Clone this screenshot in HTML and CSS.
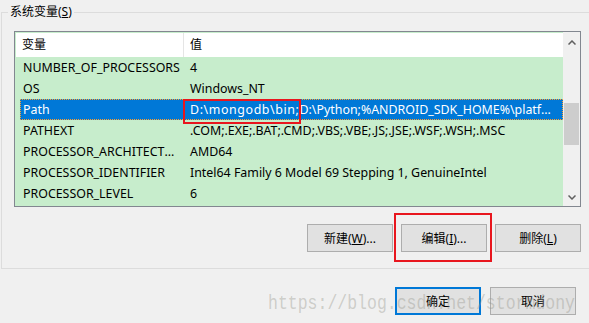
FILE: index.html
```html
<!DOCTYPE html>
<html lang="zh-CN">

<head>
    <meta charset="UTF-8">
    <meta name="viewport" content="width=device-width, initial-scale=1.0">
    <title>环境变量</title>
    <link rel="stylesheet" href="styles.css">
</head>

<body>
    <fieldset class="group">
        <legend class="group-title">系统变量(<u>S</u>)</legend>
        <div class="list">
            <div class="list-body">
                <div class="list-head">
                    <div class="head-name">变量</div>
                    <div class="head-value">值</div>
                </div>
                <div class="row">
                    <div class="cell-name">NUMBER_OF_PROCESSORS</div>
                    <div class="cell-value">4</div>
                </div>
                <div class="row">
                    <div class="cell-name">OS</div>
                    <div class="cell-value">Windows_NT</div>
                </div>
                <div class="row selected">
                    <div class="cell-name">Path</div>
                    <div class="cell-value"><span class="wide">D:\mongodb\bin;</span>D:\Python;%ANDROID_SDK_HOME%\platform-tools;C:\Windows\system32</div>
                    <div class="mark"></div>
                </div>
                <div class="row">
                    <div class="cell-name">PATHEXT</div>
                    <div class="cell-value">.COM;.EXE;.BAT;.CMD;.VBS;.VBE;.JS;.JSE;.WSF;.WSH;.MSC</div>
                </div>
                <div class="row">
                    <div class="cell-name">PROCESSOR_ARCHITECTURE</div>
                    <div class="cell-value">AMD64</div>
                </div>
                <div class="row">
                    <div class="cell-name">PROCESSOR_IDENTIFIER</div>
                    <div class="cell-value">Intel64 Family 6 Model 69 Stepping 1, GenuineIntel</div>
                </div>
                <div class="row">
                    <div class="cell-name">PROCESSOR_LEVEL</div>
                    <div class="cell-value">6</div>
                </div>
            </div>
            <div class="scrollbar">
                <div class="sb-btn sb-up">
                    <svg width="8" height="5" viewBox="0 0 8 5"><polyline points="0.5,4.5 4,1 7.5,4.5" fill="none" stroke="#606060" stroke-width="1.5"/></svg>
                </div>
                <div class="sb-track"><div class="sb-thumb"></div></div>
                <div class="sb-btn">
                    <svg width="8" height="5" viewBox="0 0 8 5"><polyline points="0.5,0.5 4,4 7.5,0.5" fill="none" stroke="#606060" stroke-width="1.5"/></svg>
                </div>
            </div>
        </div>
        <div class="actions">
            <button class="btn">新建(<u>W</u>)...</button>
            <button class="btn btn-edit">编辑(<u>I</u>)...</button>
            <button class="btn">删除(<u>L</u>)</button>
        </div>
    </fieldset>

    <div class="dialog-actions">
        <button class="btn btn-default">确定</button>
        <button class="btn">取消</button>
    </div>

    <div class="watermark">https://blog.csdn.net/stormdony</div>
</body>

</html>
```

FILE: styles.css
```css
* {
    margin: 0;
    padding: 0;
    box-sizing: border-box;
}

body {
    position: relative;
    height: 323px;
    overflow: hidden;
    background-color: #f0f0f0;
    color: #000;
    font-family: "Noto Sans", "Noto Sans CJK SC", sans-serif;
    font-size: 12px;
}

.group {
    min-width: 0;
    margin: 0 -12px 0 1px;
    padding: 7px 19px 16px 12px;
    border: 1px solid #dcdcdc;
}

.group-title {
    margin-left: -6px;
    padding: 0 2px;
    line-height: 24px;
}

/* list view */
.list {
    display: flex;
    height: 176px;
    border: 1px solid #828790;
    background-color: #c7edcc;
}

.list-body {
    flex: 1;
    min-width: 0;
    padding: 1px 0 0 1px;
}

.list-head {
    display: flex;
    height: 24px;
    line-height: 24px;
    background-color: #fff;
}

.head-name {
    width: 168px;
    padding-left: 6px;
    border-right: 1px solid #e5e5e5;
}

.head-value {
    padding-left: 6px;
}

.row {
    position: relative;
    display: flex;
    height: 21px;
    margin-left: 4px;
    line-height: 21px;
    font-size: 12.4px;
}

.cell-name,
.cell-value {
    overflow: hidden;
    white-space: nowrap;
    text-overflow: ellipsis;
}

.cell-name {
    width: 163px;
    flex-shrink: 0;
    padding: 0 1px 0 3px;
}

.cell-value {
    flex: 1;
    min-width: 0;
    padding: 0 6px 0 7px;
}

.wide {
    letter-spacing: 0.6px;
}

.selected {
    background-color: #0078d7;
    color: #fff;
    outline: 1px dotted #ff9f2e;
    outline-offset: -1px;
}

.mark {
    position: absolute;
    left: 163px;
    top: 0;
    width: 118px;
    height: 25px;
    border: 2px solid #e8161e;
}

.scrollbar {
    width: 17px;
    flex-shrink: 0;
    display: flex;
    flex-direction: column;
    background-color: #f0f0f0;
}

.sb-btn {
    height: 17px;
    display: flex;
    align-items: center;
    justify-content: center;
}

.sb-up {
    padding-top: 3px;
}

.sb-track {
    flex: 1;
    padding: 0 1px;
}

.sb-thumb {
    height: 42px;
    margin-top: 54px;
    background-color: #cdcdcd;
}

/* buttons */
.actions {
    display: flex;
    justify-content: flex-end;
    gap: 8px;
    margin-top: 17px;
}

.btn {
    width: 86px;
    height: 28px;
    border: 1px solid #adadad;
    background-color: #e1e1e1;
    color: #000;
    font: inherit;
}

.btn-edit {
    position: relative;
}

.btn-edit::after {
    content: "";
    position: absolute;
    top: -12px;
    bottom: -11px;
    left: -8px;
    right: -6px;
    border: 2px solid #e8161e;
}

.dialog-actions {
    display: flex;
    justify-content: flex-end;
    gap: 9px;
    margin-top: 18px;
    padding-right: 13px;
}

.btn-default {
    border: 2px solid #0078d7;
}

.watermark {
    position: absolute;
    left: 268px;
    top: 294px;
    font-family: "Liberation Mono", monospace;
    font-size: 20px;
    line-height: 20px;
    white-space: nowrap;
    color: rgba(150, 150, 140, 0.4);
    transform: scaleX(0.825);
    transform-origin: left;
    pointer-events: none;
}
```
